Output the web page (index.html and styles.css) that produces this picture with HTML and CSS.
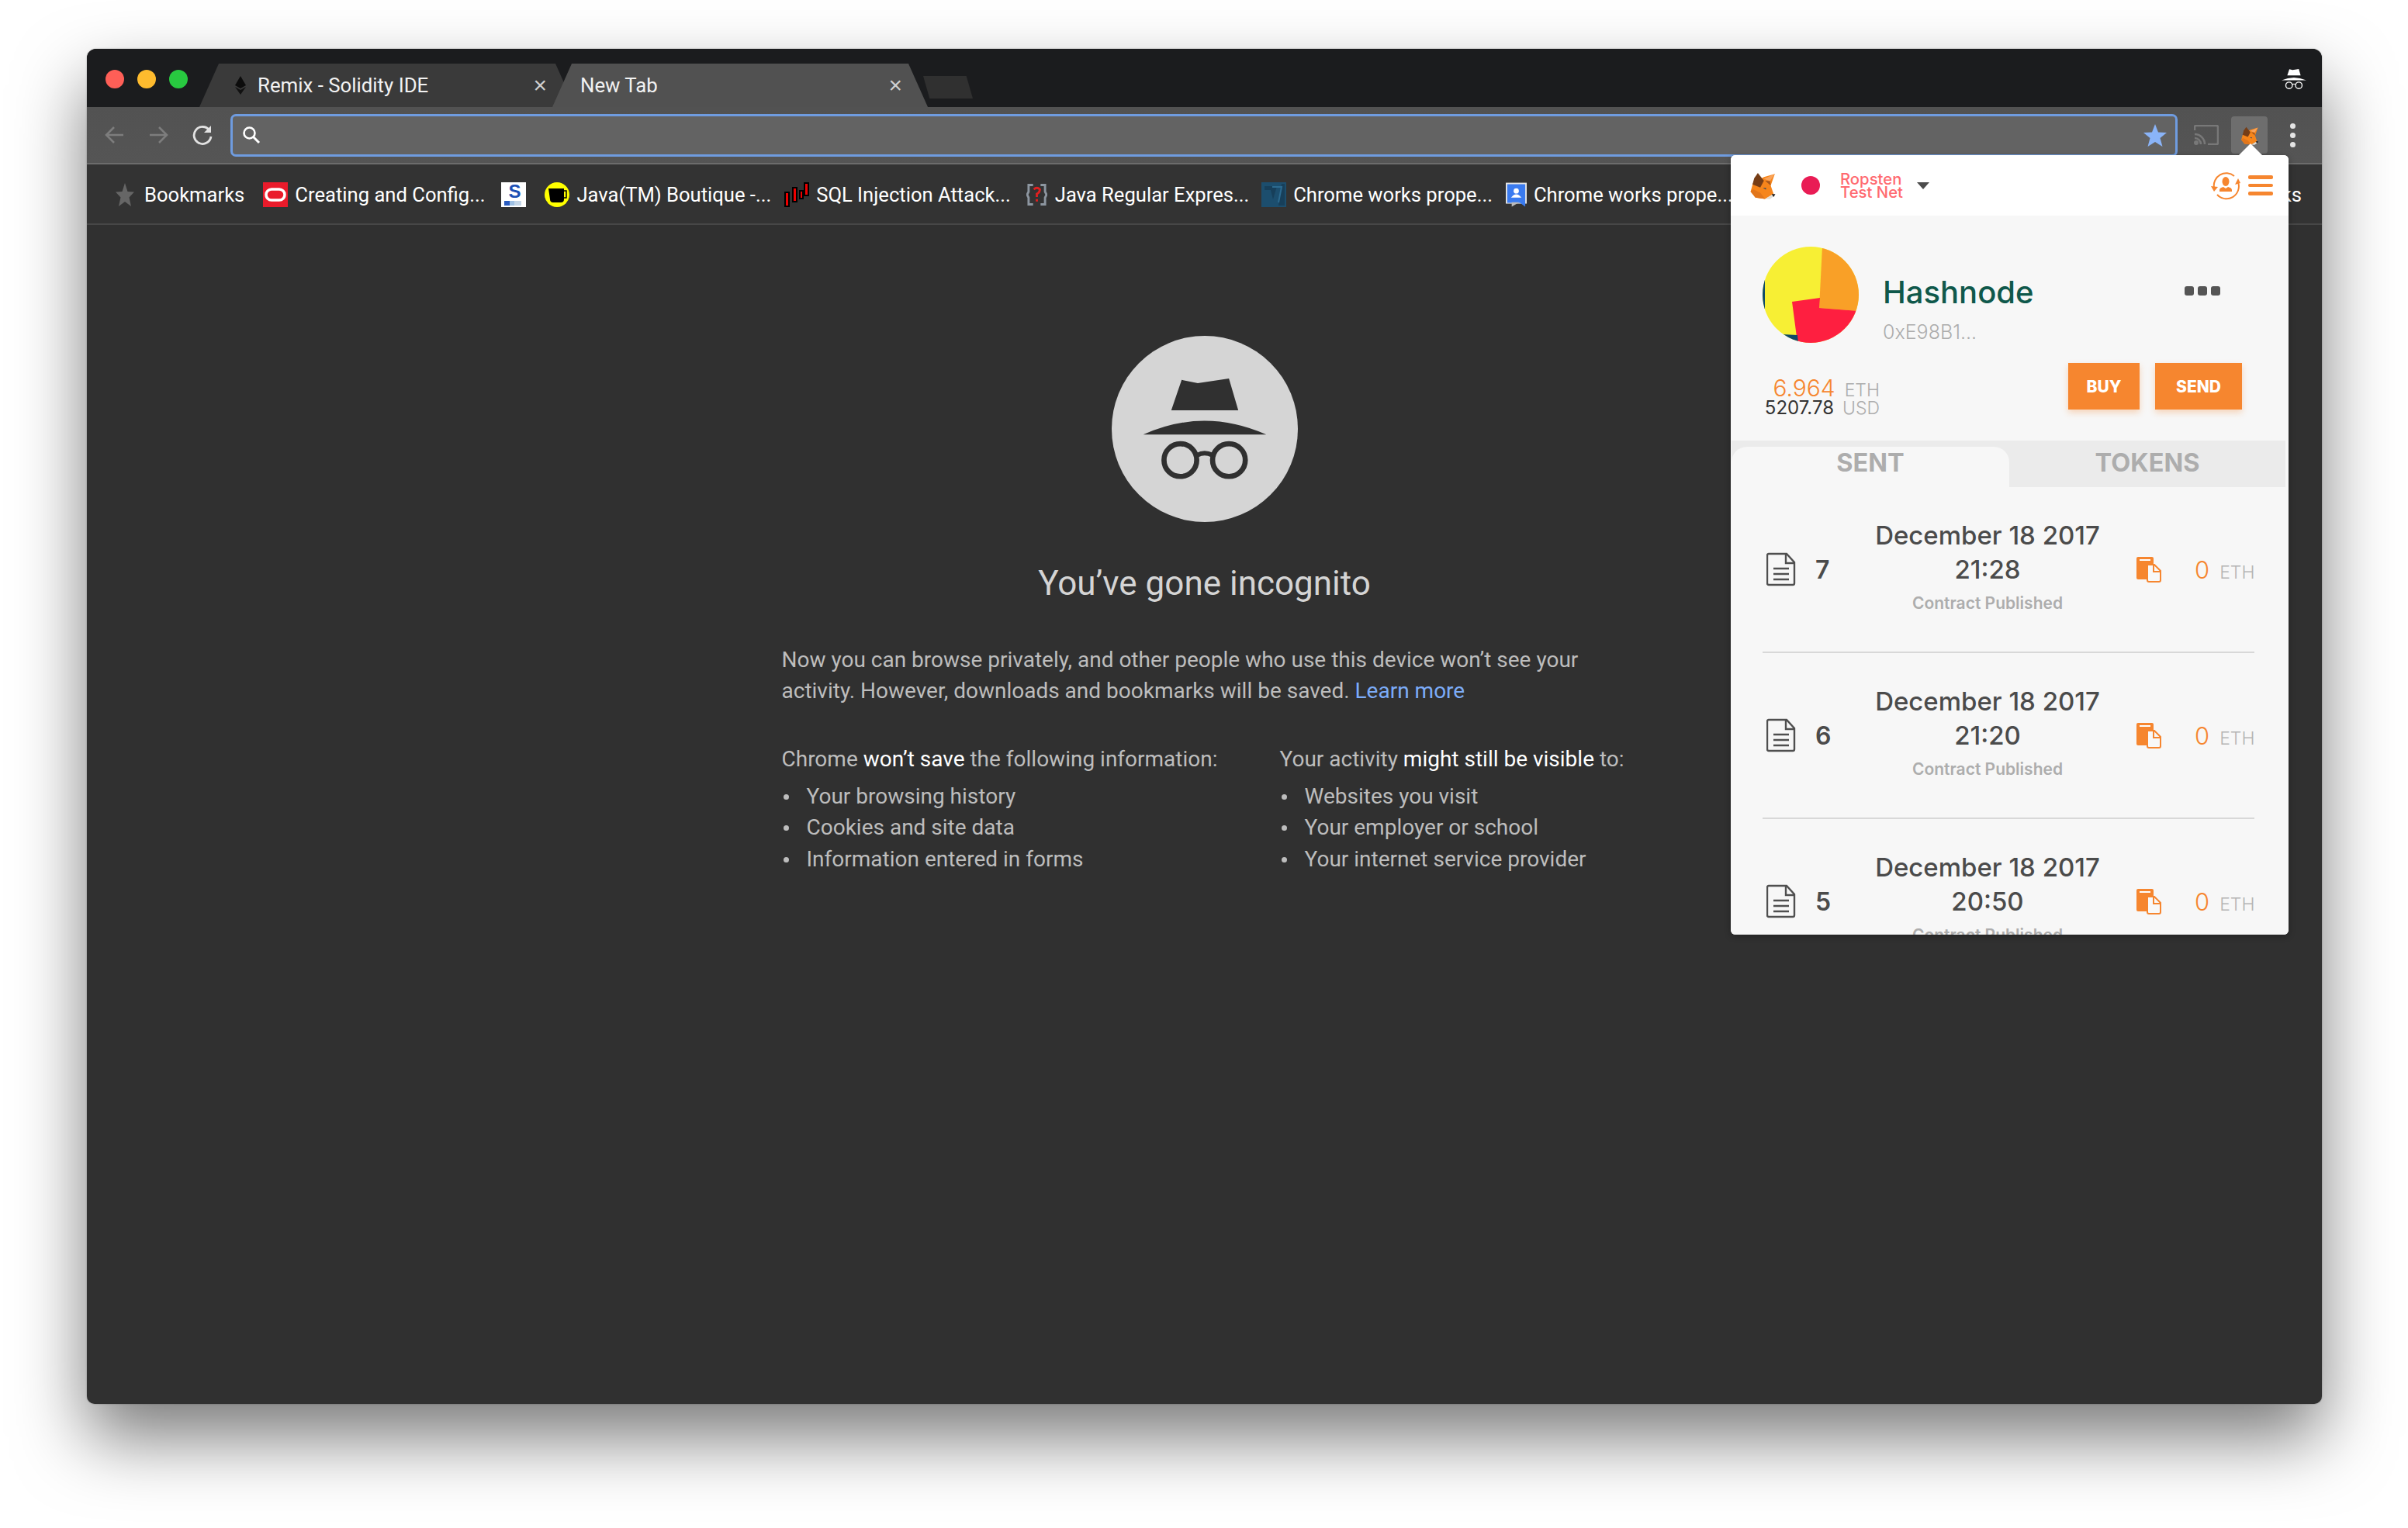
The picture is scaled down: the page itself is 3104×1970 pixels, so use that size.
FILE: index.html
```html
<!DOCTYPE html>
<html lang="en">
<head>
<meta charset="utf-8">
<title>New Tab</title>
<link rel="stylesheet" href="styles.css">
</head>
<body>
<svg class="defs" aria-hidden="true">
  <symbol id="spy" viewBox="280 238 478 392">
    <polygon points="430,245 492,258 612,240 648,362 390,362"/>
    <path d="M282 456Q516 350 756 456Z"/>
    <g fill="none" stroke="currentColor">
      <circle cx="425" cy="554" r="63" stroke-width="20"/>
      <circle cx="612" cy="554" r="63" stroke-width="20"/>
      <path d="M490 535Q518 520 548 535" stroke-width="18"/>
    </g>
  </symbol>
  <symbol id="fox" viewBox="40 33 112 116">
    <polygon fill="#f6851b" points="55,80 100,55 145,42 128,90 140,125 105,145 65,140 45,115"/>
    <polygon fill="#e2761b" points="45,115 65,140 105,145 85,120 55,105"/>
    <polygon fill="#763d16" points="53,85 60,60 75,38 100,70 85,98"/>
    <polygon fill="#f9a35a" points="100,62 145,42 125,72"/>
    <polygon fill="#a5561c" points="105,70 125,72 128,90"/>
    <polygon fill="#e4e0d8" points="105,145 133,128 140,135 125,146"/>
    <polygon fill="#1c1c1c" points="132,125 147,125 140,137"/>
    <polygon fill="#3c4a5c" points="96,100 109,100 108,107"/>
  </symbol>
  <symbol id="doc" viewBox="0 0 38 44">
    <path d="M3 2H26L36 13V40Q36 42 34 42H3Q1 42 1 40V4Q1 2 3 2ZM25 3V14H35" fill="none" stroke="currentColor" stroke-width="2.4"/>
    <path d="M9 21H29M9 28H29M9 35H29" fill="none" stroke="currentColor" stroke-width="2.6"/>
  </symbol>
  <symbol id="copy" viewBox="0 0 32 33">
    <rect x="0" y="0" width="22" height="29" rx="2" fill="#f6862f"/>
    <rect x="4" y="3" width="14" height="2" fill="#fff"/>
    <path d="M14 10H23L31 18V30Q31 32 29 32H16Q14 32 14 30Z" fill="#f8f8f8" stroke="#f6862f" stroke-width="2"/>
    <path d="M22 10V19H31" fill="none" stroke="#f6862f" stroke-width="2"/>
  </symbol>
</svg>

<main class="window">
  <header class="tabstrip">
    <div class="lights">
      <span class="light light-red"></span>
      <span class="light light-yellow"></span>
      <span class="light light-green"></span>
    </div>
    <div class="tab tab-back">
      <svg class="tab-favicon" viewBox="0 0 14 24"><polygon points="7,0 14,12 7,16 0,12" fill="#0c0c0c"/><polygon points="0,14 7,18 14,14 7,24" fill="#111"/></svg>
      <span class="tab-title">Remix - Solidity IDE</span>
      <span class="tab-close">×</span>
    </div>
    <div class="tab tab-front">
      <span class="tab-title">New Tab</span>
      <span class="tab-close">×</span>
    </div>
    <div class="newtab"></div>
    <svg class="spy-small"><use href="#spy"/></svg>
  </header>

  <div class="toolbar">
    <button class="nav nav-dim"><svg viewBox="0 0 28 28"><path d="M25 14H4M13 4L3 14L13 24" fill="none" stroke="currentColor" stroke-width="2.6"/></svg></button>
    <button class="nav nav-dim"><svg viewBox="0 0 28 28"><path d="M3 14H24M15 4L25 14L15 24" fill="none" stroke="currentColor" stroke-width="2.6"/></svg></button>
    <button class="nav nav-on"><svg viewBox="0 0 28 28"><path d="M23 8A11 11 0 1 0 25 16" fill="none" stroke="currentColor" stroke-width="2.8"/><polygon points="25,2 25,11 16,11" fill="currentColor"/></svg></button>
    <div class="omnibox">
      <svg class="omni-search" viewBox="0 0 24 24"><circle cx="9.500" cy="9.500" r="7" fill="none" stroke="currentColor" stroke-width="2.600"/><path d="M14.500 14.500L22 22" stroke="currentColor" stroke-width="3"/></svg>
      <svg class="omni-star" viewBox="0 0 30 29"><polygon points="15,0 19,10.500 30,11 21.500,18 24.500,29 15,23 5.500,29 8.500,18 0,11 11,10.500" fill="#8ab4f8"/></svg>
    </div>
    <svg class="cast" viewBox="0 0 32 26"><path d="M1 7V3Q1 1 3 1H29Q31 1 31 3V23Q31 25 29 25H18" fill="none" stroke="currentColor" stroke-width="2.600"/><path d="M1 12A13 13 0 0 1 14 25M1 17A8 8 0 0 1 9 25" fill="none" stroke="currentColor" stroke-width="2.600"/><circle cx="3" cy="23" r="3" fill="currentColor"/></svg>
    <div class="ext-btn"><svg class="ext-fox"><use href="#fox"/></svg></div>
    <div class="menu-dots"><span></span><span></span><span></span></div>
  </div>

  <nav class="bookmarks">
    <div class="bm bm-root">
      <svg class="bm-star" viewBox="0 0 24 30"><polygon points="12,0 15.500,11 24,11.500 17.500,18.500 20,30 12,24 4,30 6.500,18.500 0,11.500 8.500,11" fill="#666"/></svg>
      <span>Bookmarks</span>
    </div>
    <div class="bm bm-oracle">
      <svg class="ico" viewBox="0 0 32 32"><rect width="32" height="32" fill="#ea1b2b"/><rect x="4" y="9" width="24" height="14" rx="7" fill="none" stroke="#fff" stroke-width="3.500"/></svg>
      <span>Creating and Config...</span>
    </div>
    <div class="bm bm-s">
      <div class="s-ico"><b class="s-letter">S</b><i class="s-dots"></i></div>
    </div>
    <div class="bm bm-java">
      <svg class="ico" viewBox="0 0 32 32"><ellipse cx="16" cy="16" rx="16" ry="16" fill="#ff0"/><path d="M5 8H25V22Q25 26 21 26H11Q7 26 7 22Z" fill="#000"/><path d="M25 11H28V20H25" fill="none" stroke="#000" stroke-width="1.500"/></svg>
      <span>Java(TM) Boutique -...</span>
    </div>
    <div class="bm bm-sql">
      <svg class="ico" viewBox="0 0 32 32"><g fill="#e00" stroke="#000" stroke-width="2"><rect x="1" y="13" width="5" height="18"/><rect x="11" y="7" width="5" height="18"/><rect x="20" y="11" width="4" height="10"/><rect x="26" y="1" width="5" height="16"/></g></svg>
      <span>SQL Injection Attack...</span>
    </div>
    <div class="bm bm-regex">
      <svg class="ico ico-narrow" viewBox="0 0 28 32"><path d="M9 3H3V12L1 16L3 20V29H9M19 3H25V12L27 16L25 20V29H19" fill="none" stroke="#8d96a0" stroke-width="3"/><path d="M10 9Q14 5 18 9Q18 13 14 15V19M14 22V25" fill="none" stroke="#e02020" stroke-width="3"/></svg>
      <span>Java Regular Expres...</span>
    </div>
    <div class="bm bm-works">
      <svg class="ico" viewBox="0 0 32 32"><rect width="32" height="32" fill="#1c4e6e"/><path d="M4 5H20L15 22L12 10H4ZM26 2L22 30H30V2Z" fill="#173f5a"/><path d="M14 6H26L22 26" fill="none" stroke="#2c6a90" stroke-width="2"/></svg>
      <span>Chrome works prope...</span>
    </div>
    <div class="bm bm-docs">
      <svg class="ico ico-narrow" viewBox="0 0 28 32"><path d="M0 0H28V28H0Z" fill="#e5e5e5"/><path d="M2 2H26V32L19 27H2Z" fill="#3a7bf0"/><path d="M8 26H18L8 32Z" fill="#bbb"/><circle cx="14" cy="11" r="3.500" fill="#fff"/><path d="M7 20Q14 11 21 20Z" fill="#fff"/></svg>
      <span>Chrome works prope...</span>
    </div>
    <div class="bm bm-other"><span>Other Bookmarks</span></div>
  </nav>

  <section class="ntp">
    <div class="ntp-icon"><svg class="spy-large"><use href="#spy"/></svg></div>
    <h1 class="ntp-title">You’ve gone incognito</h1>
    <div class="ntp-body">
      <p class="ntp-para">Now you can browse privately, and other people who use this device won’t see your activity. However, downloads and bookmarks will be saved. <a class="ntp-link">Learn more</a></p>
      <div class="ntp-cols">
        <div class="ntp-col ntp-col-left">
          <p class="ntp-col-head">Chrome <strong>won’t save</strong> the following information:</p>
          <ul class="ntp-list">
            <li>Your browsing history</li>
            <li>Cookies and site data</li>
            <li>Information entered in forms</li>
          </ul>
        </div>
        <div class="ntp-col">
          <p class="ntp-col-head">Your activity <strong>might still be visible</strong> to:</p>
          <ul class="ntp-list">
            <li>Websites you visit</li>
            <li>Your employer or school</li>
            <li>Your internet service provider</li>
          </ul>
        </div>
      </div>
    </div>
  </section>

  <aside class="popup">
    <span class="popup-arrow"></span>
    <div class="popup-inner">
      <div class="mm-header">
        <svg class="mm-fox"><use href="#fox"/></svg>
        <span class="mm-net-dot"></span>
        <div class="mm-net-name">Ropsten<br>Test Net</div>
        <span class="mm-caret"></span>
        <svg class="mm-identity" viewBox="0 0 38 38">
          <path d="M30 7A16 16 0 0 0 4 22M8 31A16 16 0 0 0 35 15" fill="none" stroke="#f6862f" stroke-width="2"/>
          <polygon points="0,20 9,21 4,27" fill="#f6862f"/>
          <polygon points="31,18 38,16 35,10" fill="#f6862f"/>
          <ellipse cx="19" cy="14" rx="4.500" ry="6" fill="#f6862f"/>
          <path d="M11 27V25Q11 22 16 21L19 23L22 21Q27 22 27 25V27Z" fill="#f6862f"/>
        </svg>
        <div class="mm-burger"><span></span><span></span><span></span></div>
      </div>

      <div class="mm-body">
        <div class="mm-account">
          <svg class="mm-avatar" viewBox="0 0 124 124">
            <circle cx="62" cy="62" r="62" fill="#f7ef34"/>
            <clipPath id="avatar-clip"><circle cx="62" cy="62" r="62"/></clipPath>
            <g clip-path="url(#avatar-clip)">
              <polygon fill="#f9a027" points="77,0 73,79 124,83 124,0"/>
              <polygon fill="#fe1f40" points="38,71 74,66 73,79 124,83 124,124 45,124"/>
              <polygon fill="#0f4a68" points="0,40 3,40 3,80 0,80"/>
              <polygon fill="#0f4a68" points="25,113 45,114 46,124 25,124"/>
            </g>
          </svg>
          <div class="mm-id">
            <div class="mm-name">Hashnode</div>
            <div class="mm-addr">0xE98B1...</div>
          </div>
          <div class="mm-more"><span></span><span></span><span></span></div>
        </div>

        <div class="mm-balance-row">
          <div class="mm-balance">
            <div class="mm-line"><span class="mm-eth">6.964</span><span class="mm-unit">ETH</span></div>
            <div class="mm-line"><span class="mm-usd">5207.78</span><span class="mm-unit">USD</span></div>
          </div>
          <div class="mm-actions">
            <button class="mm-btn mm-buy">BUY</button>
            <button class="mm-btn mm-send">SEND</button>
          </div>
        </div>

        <div class="mm-tabs">
          <div class="mm-tab mm-tab-on">SENT</div>
          <div class="mm-tab">TOKENS</div>
        </div>

        <div class="mm-tx">
          <svg class="tx-doc"><use href="#doc"/></svg>
          <div class="tx-num">7</div>
          <div class="tx-info"><div>December 18 2017</div><div>21:28</div><div class="tx-status">Contract Published</div></div>
          <div class="tx-copy"><svg class="tx-copy-ico"><use href="#copy"/></svg></div>
          <div class="tx-val"><span class="tx-zero">0</span><span class="tx-unit">ETH</span></div>
        </div>
        <div class="mm-tx">
          <svg class="tx-doc"><use href="#doc"/></svg>
          <div class="tx-num">6</div>
          <div class="tx-info"><div>December 18 2017</div><div>21:20</div><div class="tx-status">Contract Published</div></div>
          <div class="tx-copy"><svg class="tx-copy-ico"><use href="#copy"/></svg></div>
          <div class="tx-val"><span class="tx-zero">0</span><span class="tx-unit">ETH</span></div>
        </div>
        <div class="mm-tx">
          <svg class="tx-doc"><use href="#doc"/></svg>
          <div class="tx-num">5</div>
          <div class="tx-info"><div>December 18 2017</div><div>20:50</div><div class="tx-status">Contract Published</div></div>
          <div class="tx-copy"><svg class="tx-copy-ico"><use href="#copy"/></svg></div>
          <div class="tx-val"><span class="tx-zero">0</span><span class="tx-unit">ETH</span></div>
        </div>
      </div>
    </div>
  </aside>
</main>
</body>
</html>
```

FILE: styles.css
```css
* { box-sizing: border-box; }
html, body { margin: 0; padding: 0; }
body {
  width: 3104px;
  height: 1970px;
  padding: 63px 0 0 112px;
  background: #fff;
  overflow: hidden;
  font-family: Roboto, "Liberation Sans", sans-serif;
}
.defs { position: absolute; width: 0; height: 0; }

.window {
  position: relative;
  width: 2881px;
  height: 1747px;
  display: flex;
  flex-direction: column;
  background: #303030;
  border-radius: 12px 12px 10px 10px;
  box-shadow: 0 44px 90px rgba(0, 0, 0, .52), 0 0 2px rgba(0, 0, 0, .4);
}

/* tab strip */
.tabstrip {
  height: 75px;
  flex: none;
  display: flex;
  align-items: flex-end;
  background: #1b1c1e;
  border-radius: 12px 12px 0 0;
  padding-right: 20px;
}
.lights { display: flex; gap: 17px; align-self: flex-start; padding: 27px 0 0 24px; width: 145px; flex: none; }
.light { width: 24px; height: 24px; border-radius: 50%; flex: none; }
.light-red { background: #fe5f57; }
.light-yellow { background: #febb2e; }
.light-green { background: #28c940; }
.tab {
  width: 484px;
  height: 56px;
  flex: none;
  display: flex;
  align-items: center;
  clip-path: polygon(25px 0, calc(100% - 25px) 0, 100% 100%, 0 100%);
  color: #f2f2f2;
  font-size: 25.800px;
}
.tab-back { background: #3a3a3a; padding: 0 36px 0 46px; }
.tab-front { background: #515151; margin-left: -29px; padding: 0 33px 0 36px; position: relative; }
.tab-favicon { width: 14px; height: 24px; margin-right: 15px; flex: none; }
.tab-title { flex: 1; white-space: nowrap; }
.tab-close { font-size: 30px; line-height: 1; color: #d0d0d0; font-family: "Liberation Sans", sans-serif; }
.newtab {
  width: 64px;
  height: 29px;
  align-self: flex-start;
  margin: 35px 0 0 -6px;
  background: #303030;
  clip-path: polygon(0 0, 87% 0, 100% 100%, 13% 100%);
  flex: none;
}
.spy-small { width: 32px; height: 30px; margin: 0 0 21px auto; color: #fff; fill: currentColor; align-self: flex-end; }

/* toolbar */
.toolbar {
  height: 74px;
  flex: none;
  display: flex;
  align-items: center;
  background: linear-gradient(#525252, #555);
  border-bottom: 2px solid #6c6c6c;
  padding-left: 8px;
}
.nav {
  width: 56px;
  height: 48px;
  flex: none;
  padding: 0;
  display: flex;
  align-items: center;
  justify-content: center;
  background: none;
  border: 0;
}
.nav svg { width: 28px; height: 28px; }
.nav-dim { color: #7d7d7d; }
.nav-on { color: #e2e2e2; margin-left: 1px; }
.omnibox {
  width: 2510px;
  height: 55px;
  margin-left: 8px;
  flex: none;
  display: flex;
  align-items: center;
  justify-content: space-between;
  padding: 0 11px 0 12px;
  background: #636363;
  border: 3px solid #6f9ce0;
  border-radius: 7px;
}
.omni-search { width: 24px; height: 24px; color: #fff; }
.omni-star { width: 30px; height: 29px; }
.cast { width: 32px; height: 26px; margin-left: 21px; color: #787878; flex: none; }
.ext-btn {
  width: 47px;
  height: 48px;
  margin-left: 16px;
  background: #6e6e6e;
  border-radius: 4px;
  display: flex;
  justify-content: center;
  padding-top: 7px;
  flex: none;
}
.ext-fox { width: 24px; height: 36px; }
.menu-dots { display: flex; flex-direction: column; gap: 5px; margin-left: 29px; flex: none; }
.menu-dots span { width: 7px; height: 7px; border-radius: 50%; background: #e4e4e4; }

/* bookmarks */
.bookmarks {
  height: 78px;
  flex: none;
  display: flex;
  align-items: center;
  background: #333;
  border-bottom: 2px solid #474747;
  padding: 2px 0 0 37px;
  color: #fff;
  font-size: 25.600px;
  white-space: nowrap;
}
.bm { display: flex; align-items: center; gap: 9px; flex: none; }
.bm-root { gap: 13px; margin-right: 24px; }
.bm-oracle { margin-right: 21px; }
.bm-s { margin-right: 24px; }
.bm-java { margin-right: 17px; }
.bm-sql { margin-right: 20px; }
.bm-regex { gap: 10px; margin-right: 16px; }
.bm-works { margin-right: 17px; }
.bm-other { margin-left: auto; padding-right: 26px; }
.bm-star { width: 24px; height: 30px; }
.ico { width: 32px; height: 32px; flex: none; }
.ico-narrow { width: 27px; }
.s-ico { width: 32px; height: 32px; background: #fff; position: relative; }
.s-letter { position: absolute; left: 9px; top: 0; font: bold 24px/24px "Liberation Sans", sans-serif; color: #1c4fb4; }
.s-dots { position: absolute; left: 4px; bottom: 2px; width: 22px; height: 6px; background: linear-gradient(90deg, #2a5cc0 30%, #9ec0e4 30%, #9ec0e4 60%, #c4d6e8 60%); }

/* incognito page */
.ntp { flex: 1; display: flex; flex-direction: column; align-items: center; padding-top: 143px; color: #bdbdbd; font-size: 28px; line-height: 40px; }
.ntp-icon {
  width: 240px;
  height: 240px;
  border-radius: 50%;
  background: #d5d5d5;
  display: flex;
  align-items: center;
  justify-content: center;
  flex: none;
}
.spy-large { width: 160px; height: 132px; color: #303030; fill: currentColor; }
.ntp-title { margin: 54px 0 0; font-size: 44px; line-height: 50px; font-weight: 400; color: #d4d4d4; }
.ntp-body { width: 1090px; margin-top: 54px; }
.ntp-para { margin: 0; width: 1040px; }
.ntp-link { color: #7cacf8; }
.ntp-cols { display: flex; margin-top: 48px; }
.ntp-col { white-space: nowrap; }
.ntp-col-left { width: 642px; flex: none; }
.ntp-col-head { margin: 0 0 8px; }
.ntp-col-head strong { font-weight: 400; color: #fff; }
.ntp-list { margin: 0; padding: 0 0 0 32px; line-height: 40.300px; list-style: none; }
.ntp-list li { position: relative; }
.ntp-list li::before {
  content: "";
  position: absolute;
  left: -30px;
  top: 17px;
  width: 7px;
  height: 7px;
  border-radius: 50%;
  background: #bdbdbd;
}

/* metamask popup */
.popup {
  position: absolute;
  left: 2119px;
  top: 137px;
  width: 719px;
  height: 1005px;
  font-family: Inter, "Liberation Sans", sans-serif;
  box-shadow: 0 2px 8px rgba(0, 0, 0, .3);
  border-radius: 6px;
}
.popup-arrow {
  position: absolute;
  left: 655px;
  top: -15px;
  width: 0;
  height: 0;
  border: solid transparent;
  border-width: 0 15px 15px;
  border-bottom-color: #fff;
}
.popup-inner { width: 100%; height: 100%; border-radius: 6px; overflow: hidden; background: #fff; }
.mm-header { height: 78px; display: flex; align-items: center; padding-left: 24px; background: #fff; }
.mm-fox { width: 35px; height: 37px; flex: none; }
.mm-net-dot { width: 24px; height: 24px; border-radius: 50%; background: #e91c55; margin-left: 32px; flex: none; }
.mm-net-name { margin-left: 26px; color: #ff6a70; font-size: 20.300px; line-height: 17.500px; font-weight: 500; width: 90px; white-space: nowrap; }
.mm-caret { width: 0; height: 0; border: solid transparent; border-width: 9px 8px 0; border-top-color: #4c4c4c; margin-left: 9px; }
.mm-identity { width: 38px; height: 38px; margin-left: auto; }
.mm-burger { display: flex; flex-direction: column; gap: 6px; margin: 0 20px 0 10px; }
.mm-burger span { width: 32px; height: 4.500px; background: #f6862f; border-radius: 2px; }

.mm-body { background: #f7f7f7; }
.mm-account { display: flex; height: 164px; padding: 40px 88px 0 41px; }
.mm-avatar { width: 124px; height: 124px; flex: none; }
.mm-id { margin-left: 31px; padding-top: 34px; }
.mm-name { font-size: 40px; line-height: 50px; font-weight: 500; color: #0f584b; }
.mm-addr { font-size: 25px; line-height: 32px; margin-top: 10px; color: #adadad; font-weight: 300; }
.mm-more { display: flex; gap: 5px; margin: 51px 0 0 auto; }
.mm-more span { width: 12px; height: 12px; border-radius: 3px; background: #555; }

.mm-balance-row { display: flex; height: 60px; margin-top: 26px; padding: 0 60px 0 41px; }
.mm-balance { width: 151px; margin-top: 20px; text-align: right; white-space: nowrap; font-size: 24px; line-height: 25px; font-weight: 300; }
.mm-line { height: 25px; }
.mm-eth { color: #f6862f; font-size: 30px; margin-right: 12px; }
.mm-usd { color: #333; margin-right: 11px; font-weight: 400; }
.mm-unit { color: #adadad; font-size: 23px; }
.mm-actions { display: flex; gap: 20px; margin-left: auto; }
.mm-btn {
  height: 60px;
  padding: 0;
  border: 0;
  background: #f6862f;
  color: #fff;
  font: 800 21px Inter, "Liberation Sans", sans-serif;
  box-shadow: 0 4px 8px rgba(246, 134, 47, .3);
}
.mm-buy { width: 92px; }
.mm-send { width: 112px; }

.mm-tabs { display: flex; align-items: stretch; width: 714px; height: 60px; margin: 40px 0 0 1px; background: #ebebeb; color: #adadad; font-size: 32.500px; font-weight: 700; }
.mm-tab { flex: 1; display: flex; justify-content: center; padding-top: 9px; line-height: 40px; }
.mm-tab-on { flex: none; width: 358px; margin-top: 8px; padding-top: 1px; background: #f7f7f7; border-radius: 20px 20px 0 0; }

.mm-tx {
  display: grid;
  grid-template-columns: 68px 60px 324px 105px 77px;
  align-items: center;
  height: 214px;
  margin: 0 44px 0 41px;
  border-bottom: 2px solid #d8d8d8;
  color: #4b4b4b;
}
.tx-doc { width: 38px; height: 44px; margin-left: 5px; color: #4f4f4f; }
.tx-num { font-size: 32px; font-weight: 600; }
.tx-info { text-align: center; font-size: 33px; line-height: 44px; font-weight: 500; white-space: nowrap; }
.tx-status { font-size: 21px; font-weight: 600; color: #adadad; }
.tx-copy { padding-left: 30px; display: flex; }
.tx-copy-ico { width: 32px; height: 33px; }
.tx-val { display: flex; align-items: baseline; gap: 13px; white-space: nowrap; }
.tx-zero { color: #f6862f; font-size: 31px; font-weight: 300; }
.tx-unit { color: #b4b4b4; font-size: 23px; font-weight: 300; }
```
